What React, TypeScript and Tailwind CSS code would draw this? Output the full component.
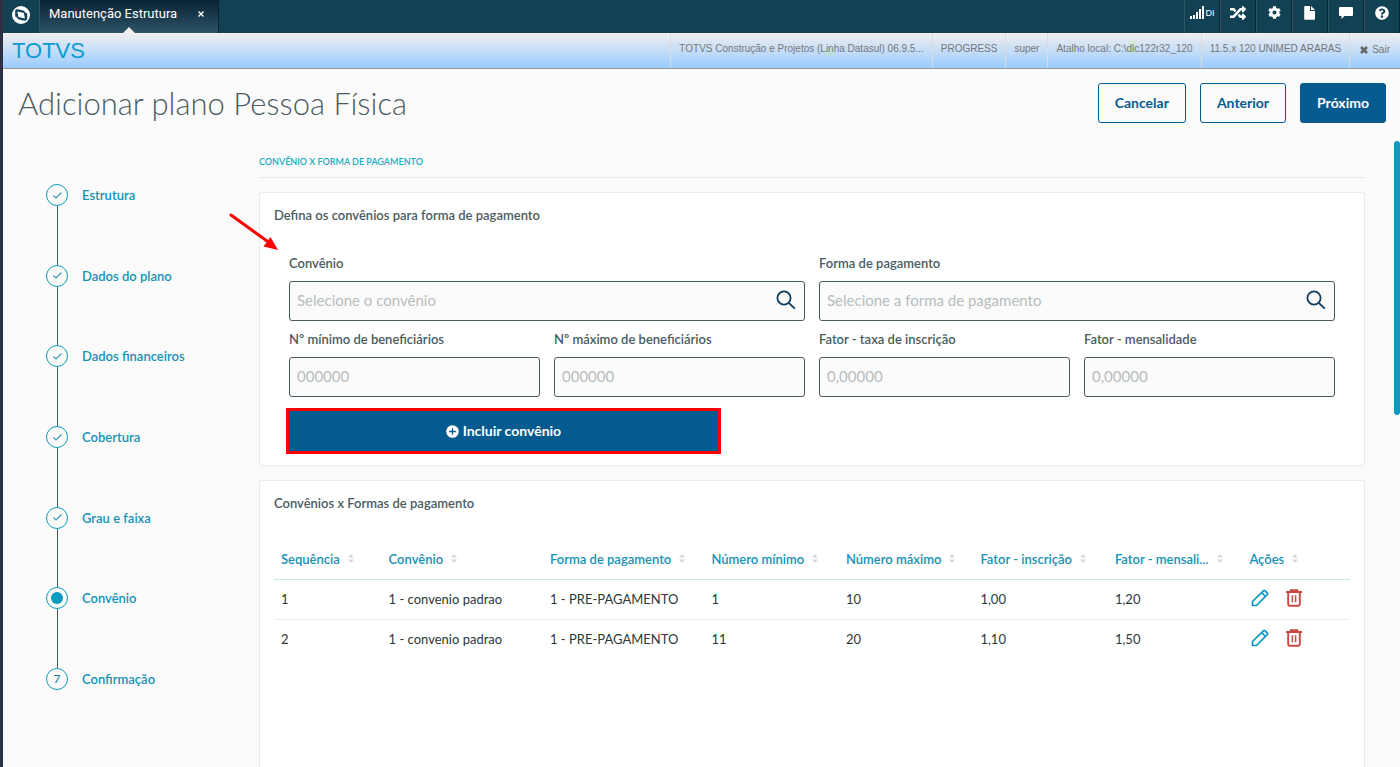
import type { ReactNode } from "react";
import { FaCog, FaQuestionCircle, FaRandom } from "react-icons/fa";

const steps = ["Estrutura", "Dados do plano", "Dados financeiros", "Cobertura", "Grau e faixa", "Convênio", "Confirmação"];
const currentStep = 5;

const session = [
  "TOTVS Construção e Projetos (Linha Datasul) 06.9.5...",
  "PROGRESS",
  "super",
  "Atalho local: C:\\dlc122r32_120",
  "11.5.x 120 UNIMED ARARAS",
];

const columns = [
  { label: "Sequência", width: "w-[10%]" },
  { label: "Convênio", width: "w-[15%]" },
  { label: "Forma de pagamento", width: "w-[15%]" },
  { label: "Número mínimo", width: "w-[12.5%]" },
  { label: "Número máximo", width: "w-[12.5%]" },
  { label: "Fator - inscrição", width: "w-[12.5%]" },
  { label: "Fator - mensali...", width: "w-[12.5%]" },
  { label: "Ações", width: "w-[10%]" },
];

const rows = [
  ["1", "1 - convenio padrao", "1 - PRE-PAGAMENTO", "1", "10", "1,00", "1,20"],
  ["2", "1 - convenio padrao", "1 - PRE-PAGAMENTO", "11", "20", "1,10", "1,50"],
];

function Logo() {
  return (
    <svg width="20" height="20" viewBox="0 0 20 20">
      <circle cx="10" cy="10" r="9" fill="#fff" />
      <path d="M4.200 5.200Q5 4 6.500 4.300L13.500 5.800 16.200 8.500V13.800Q15.500 16 13.500 15.700L7 14.300 4.200 11.500Z" fill="#134154" />
      <path d="M6.300 6.600 12.900 8 13.900 13.400 7.300 12Z" fill="#fff" />
      <path d="M13.200 5.400 15.800 8M4.400 12l2.600 2.600" stroke="#fff" strokeWidth="1.200" />
    </svg>
  );
}

function SignalIcon() {
  return (
    <svg width="14" height="13" viewBox="0 0 14 13" fill="currentColor" shapeRendering="crispEdges">
      <path d="M0 10h2v3H0zM3 9h2v4H3zM6 6h2v7H6zM9 3h2v10H9zM12 0h2v13h-2z" />
    </svg>
  );
}

function FileIcon() {
  return (
    <svg width="12" height="14" viewBox="0 0 12 14" fill="currentColor">
      <path d="M1 0h5v5h5v8a.8.8 0 0 1-.8.8H1A.8.8 0 0 1 .2 13V.8A.8.8 0 0 1 1 0zM7 0l4 4H7z" />
    </svg>
  );
}

function ChatIcon() {
  return (
    <svg width="14" height="12" viewBox="0 0 14 12" fill="currentColor">
      <path d="M1 0h12a1 1 0 0 1 1 1v7a1 1 0 0 1-1 1H5.500L2.500 12V9H1A1 1 0 0 1 0 8V1a1 1 0 0 1 1-1z" />
    </svg>
  );
}

function SearchIcon() {
  return (
    <svg width="20" height="20" viewBox="0 0 20 20" fill="none" stroke="#0c3c5c" strokeWidth="1.800">
      <circle cx="8" cy="8" r="6.600" />
      <path d="m12.800 12.800 6 5.800" />
    </svg>
  );
}

function PencilIcon() {
  return (
    <svg width="18" height="18" viewBox="0 0 18 18" fill="none" stroke="#0c9abe" strokeWidth="1.700" strokeLinejoin="round">
      <path d="M1.500 16.500V12.500L12.600 1.600Q13.200 1 13.800 1.600L16.400 4.200Q17 4.800 16.400 5.400L5.500 16.500Z" />
      <path d="m10.700 3.600 3.700 3.700" />
    </svg>
  );
}

function TrashIcon() {
  return (
    <svg width="18" height="18" viewBox="0 0 18 18" fill="none" stroke="#c64840" strokeWidth="1.900">
      <path d="M1 3h16M5.800 3V1.300h6.400V3M3.200 3.200v12a1.500 1.500 0 0 0 1.500 1.500h8.600a1.500 1.500 0 0 0 1.500-1.500v-12" />
      <path d="M7.400 6.200v7M10.600 6.200v7" strokeWidth="1.500" />
    </svg>
  );
}

function SortIcon() {
  return (
    <svg width="6" height="9" viewBox="0 0 6 9" fill="#d3d8da" className="shrink-0">
      <path d="M3 0 6 3.500H0zM3 9 0 5.500h6z" />
    </svg>
  );
}

function TopButton({ label, children }: { label: string; children: ReactNode }) {
  return (
    <button aria-label={label} className="flex h-full w-9 items-center justify-center gap-0.5 border-r border-l border-r-[#08222f] border-l-[#2c5566] pb-2">
      {children}
    </button>
  );
}

function Field({ id, label, placeholder, wide, search }: { id: string; label: string; placeholder: string; wide?: boolean; search?: boolean }) {
  return (
    <div className={wide ? "col-span-2" : ""}>
      <label htmlFor={id} className="mb-2 block font-semibold">{label}</label>
      <div className="relative">
        <input
          id={id}
          placeholder={placeholder}
          className="block h-10 w-full rounded-[3px] border border-[#4a5c60] bg-[#fbfbfb] px-[7px] pb-0.5 text-[15px] placeholder:text-[#b6bdbf]"
        />
        {search && (
          <button type="button" aria-label="Pesquisar" className="absolute top-[9px] right-[9px]">
            <SearchIcon />
          </button>
        )}
      </div>
    </div>
  );
}

function Stepper() {
  return (
    <ol className="flex h-[506px] flex-col">
      {steps.map((step, i) => (
        <li key={step} className={i < steps.length - 1 ? "flex flex-1 gap-[14px]" : "flex gap-[14px]"}>
          <div className="flex w-[22px] flex-col items-center">
            <span className="flex size-[22px] shrink-0 items-center justify-center rounded-full border border-[#0c9abe] text-xs text-[#0c7f9e]">
              {i < currentStep && (
                <svg width="9" height="7" viewBox="0 0 9 7" fill="none" stroke="#3a9ab4" strokeWidth="1.200">
                  <path d="m.5 3.500 2.500 2.500L8.500.5" />
                </svg>
              )}
              {i === currentStep && <span className="size-3 rounded-full bg-[#0c9abe]" />}
              {i > currentStep && i + 1}
            </span>
            {i < steps.length - 1 && <span className="w-px flex-1 bg-[#4a5c60]" />}
          </div>
          <a href="#" className="h-[22px] leading-[22px] font-semibold text-[#1592b6]">{step}</a>
        </li>
      ))}
    </ol>
  );
}

export default function App() {
  return (
    <div className="flex h-screen flex-col overflow-hidden border-l-[3px] border-[#2c3040] bg-[#fbfbfb] font-[Lato,sans-serif] text-[13px] leading-5 text-[#4a5c60]">
      <header className="flex h-[33px] shrink-0 justify-between bg-[#134154] text-white">
        <div className="flex">
          <a href="#" aria-label="Início" className="flex w-9 items-center justify-center pb-1">
            <Logo />
          </a>
          <div className="relative flex w-[180px] items-center justify-between border-r border-l border-r-[#08222f] border-l-[#2c5566] bg-linear-to-b from-[#0a2434] to-[#2d5368] pr-[14px] pb-[6px] pl-[9px] font-[Roboto,sans-serif]">
            <span>Manutenção Estrutura</span>
            <button aria-label="Fechar">
              <svg width="6" height="6" viewBox="0 0 6 6" stroke="#fff" strokeWidth="1.300"><path d="m.5.5 5 5m0-5-5 5" /></svg>
            </button>
            <span className="absolute bottom-0 left-1/2 -translate-x-1/2 border-x-[6px] border-b-[6px] border-x-transparent border-b-[#f0eeee]" />
          </div>
        </div>
        <div className="flex">
          <TopButton label="Conexão">
            <SignalIcon />
            <span className="font-['Liberation_Sans',sans-serif] text-[9px]">DI</span>
          </TopButton>
          <TopButton label="Alternar"><FaRandom size={16} /></TopButton>
          <TopButton label="Configurações"><FaCog size={13} /></TopButton>
          <TopButton label="Documentos"><FileIcon /></TopButton>
          <TopButton label="Mensagens"><ChatIcon /></TopButton>
          <TopButton label="Ajuda"><FaQuestionCircle size={14} /></TopButton>
        </div>
      </header>

      <div className="flex h-9 shrink-0 justify-between border-b border-[#8f959c] bg-linear-to-b from-[#f0eeee] to-[#9accff] font-['Liberation_Sans',sans-serif]">
        <span className="pl-[9px] text-[22px] leading-9 text-[#0c9ad0]">TOTVS</span>
        <div className="flex text-[10px] leading-8 text-[#777]">
          {session.map((item) => (
            <span key={item} className="border-l border-[#dcdcdc] px-2">{item}</span>
          ))}
          <a href="#" className="flex items-center gap-1 border-l border-[#dcdcdc] px-[10px] pb-0.5">
            <svg width="8" height="8" viewBox="0 0 8 8" stroke="#666" strokeWidth="2.600"><path d="m1 1 6 6M7 1 1 7" /></svg>
            Sair
          </a>
        </div>
      </div>

      <div className="flex shrink-0 items-start justify-between pt-[14px] pr-[14px] pl-[15px]">
        <h1 className="text-[31px] leading-10 font-light">Adicionar plano Pessoa Física</h1>
        <div className="flex gap-[14px] text-sm font-bold">
          <button className="h-10 rounded-[3px] border border-[#045b8f] px-4 text-[#045b8f]">Cancelar</button>
          <button className="h-10 rounded-[3px] border border-[#045b8f] px-4 text-[#045b8f]">Anterior</button>
          <button className="h-10 rounded-[3px] border border-[#045b8f] bg-[#045b8f] px-4 text-white">Próximo</button>
        </div>
      </div>

      <div className="mt-[18px] flex min-h-0 flex-1 overflow-hidden">
        <aside className="w-[256px] shrink-0 pt-[43px] pl-[43px]">
          <Stepper />
        </aside>

        <main className="flex min-w-0 flex-1 flex-col pt-[11px]">
          <h2 className="mb-[14px] border-b border-[#ebebeb] pb-[5px] text-[9px] font-semibold text-[#18adc4]">CONVÊNIO X FORMA DE PAGAMENTO</h2>

          <section className="mb-[14px] rounded-[3px] border border-[#ebebeb] bg-white px-[29px] pt-3 pb-[14px]">
            <h3 className="-ml-[15px] mb-7 font-semibold">Defina os convênios para forma de pagamento</h3>
            <form className="grid grid-cols-4 gap-x-[14px] gap-y-2">
              <Field id="convenio" label="Convênio" placeholder="Selecione o convênio" wide search />
              <Field id="forma" label="Forma de pagamento" placeholder="Selecione a forma de pagamento" wide search />
              <Field id="minimo" label="Nº mínimo de beneficiários" placeholder="000000" />
              <Field id="maximo" label="Nº máximo de beneficiários" placeholder="000000" />
              <Field id="taxa" label="Fator - taxa de inscrição" placeholder="0,00000" />
              <Field id="mensalidade" label="Fator - mensalidade" placeholder="0,00000" />
            </form>
            <button className="mt-[14px] flex h-10 w-[41%] items-center justify-center gap-1 bg-[#045b8f] text-sm font-bold text-white outline-3 outline-[#ff0000]">
              <svg width="13" height="13" viewBox="0 0 13 13">
                <circle cx="6.500" cy="6.500" r="6.300" fill="#fff" />
                <path d="M6.500 3.200v6.600M3.200 6.500h6.600" stroke="#045b8f" strokeWidth="1.300" />
              </svg>
              Incluir convênio
            </button>
          </section>

          <section className="flex-1 rounded-t-[3px] border border-b-0 border-[#ebebeb] bg-white px-[14px] pt-3">
            <h3 className="mb-[26px] font-semibold">Convênios x Formas de pagamento</h3>
            <table className="w-full table-fixed text-left">
              <thead>
                <tr className="border-b border-[#cfe9f0]">
                  {columns.map((col) => (
                    <th key={col.label} className={`${col.width} h-10 px-[7px] font-semibold whitespace-nowrap text-[#1592b6]`}>
                      <div className="flex items-center gap-2">
                        {col.label}
                        <SortIcon />
                      </div>
                    </th>
                  ))}
                </tr>
              </thead>
              <tbody className="text-[#2c3739]">
                {rows.map((row, i) => (
                  <tr key={row[0]} className={i < rows.length - 1 ? "border-b border-[#ebebeb]" : ""}>
                    {row.map((cell, j) => (
                      <td key={j} className="h-10 px-[7px]">{cell}</td>
                    ))}
                    <td className="h-10 px-[9px] pb-0.5">
                      <div className="flex gap-4">
                        <button aria-label="Editar"><PencilIcon /></button>
                        <button aria-label="Excluir"><TrashIcon /></button>
                      </div>
                    </td>
                  </tr>
                ))}
              </tbody>
            </table>
          </section>
        </main>

        <div className="flex w-[35px] shrink-0 justify-end">
          <span className="h-[274px] w-[6px] rounded-full bg-[#0c9abe]" />
        </div>
      </div>

      {/* annotation arrow pointing at the form */}
      <svg width="50" height="38" viewBox="0 0 50 38" className="pointer-events-none absolute top-[213px] left-[229px]">
        <path d="M2 2 38 28" stroke="#ff0000" strokeWidth="3" strokeLinecap="round" />
        <path d="M49 37 34.500 33.500 41.500 24Z" fill="#ff0000" />
      </svg>
    </div>
  );
}
